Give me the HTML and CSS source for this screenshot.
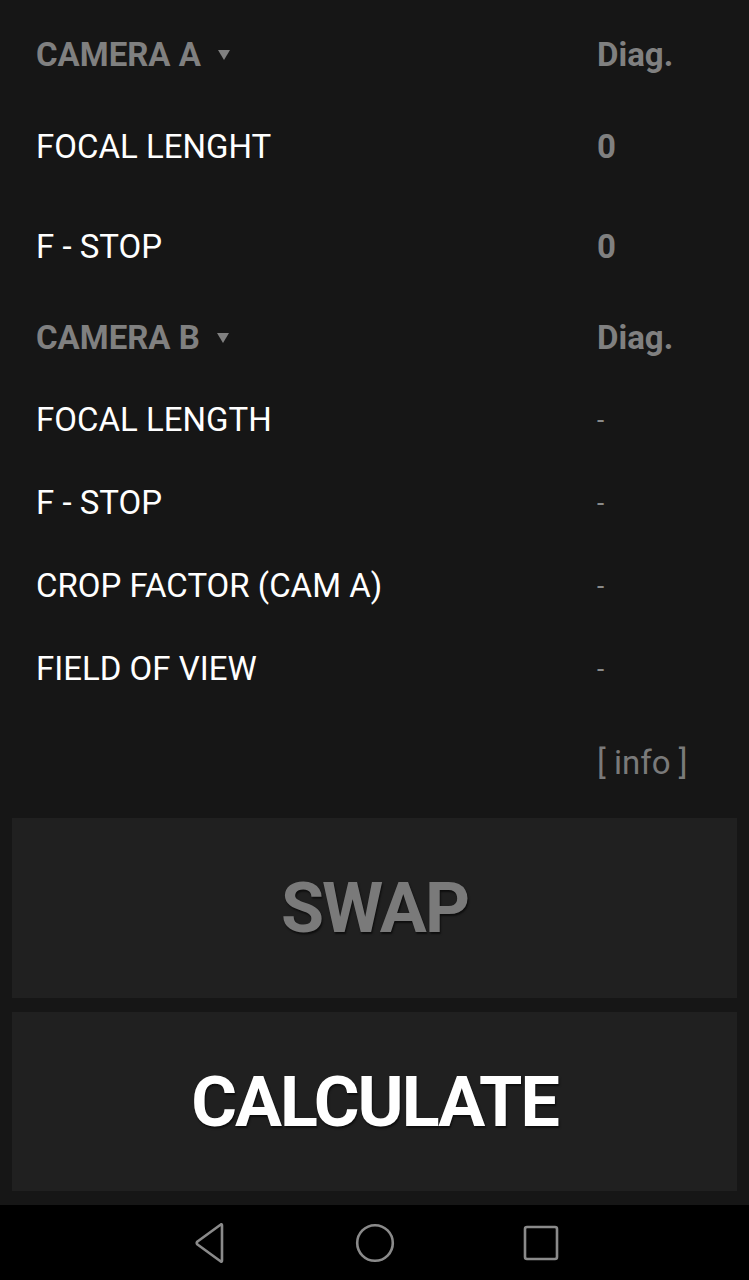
FILE: index.html
```html
<!DOCTYPE html>
<html lang="en">
<head>
    <meta charset="UTF-8">
    <meta name="viewport" content="width=device-width, initial-scale=1.0">
    <title>Lens Converter</title>
    <link rel="stylesheet" href="styles.css">
</head>
<body>
    <div class="app">
        <div class="list">
            <div class="section section-a">
                <div class="row head">
                    <div class="label">CAMERA A <span class="caret"></span></div>
                    <div class="value">Diag.</div>
                </div>
                <div class="row">
                    <div class="label">FOCAL LENGHT</div>
                    <div class="value">0</div>
                </div>
                <div class="row">
                    <div class="label">F - STOP</div>
                    <div class="value">0</div>
                </div>
            </div>

            <div class="section section-b">
                <div class="row head">
                    <div class="label">CAMERA B <span class="caret"></span></div>
                    <div class="value">Diag.</div>
                </div>
                <div class="row">
                    <div class="label">FOCAL LENGTH</div>
                    <div class="value dash">-</div>
                </div>
                <div class="row">
                    <div class="label">F - STOP</div>
                    <div class="value dash">-</div>
                </div>
                <div class="row">
                    <div class="label">CROP FACTOR (CAM A)</div>
                    <div class="value dash">-</div>
                </div>
                <div class="row">
                    <div class="label">FIELD OF VIEW</div>
                    <div class="value dash">-</div>
                </div>
                <div class="row info-row">
                    <div class="label"></div>
                    <div class="value info">[ info ]</div>
                </div>
            </div>
        </div>

        <div class="buttons">
            <button class="big-button swap">SWAP</button>
            <button class="big-button calculate">CALCULATE</button>
        </div>
    </div>

    <div class="nav-bar">
        <svg class="nav-icon" width="40" height="40" viewBox="0 0 40 40">
            <path d="M33 2.5 L33 37.5 Q33 39.5 31.5 38.3 L8.5 21.5 Q7 20 8.5 18.5 L31.5 1.7 Q33 0.5 33 2.5 Z" fill="none" stroke="#8a8a8a" stroke-width="2.6" stroke-linejoin="round"/>
        </svg>
        <svg class="nav-icon" width="40" height="40" viewBox="0 0 40 40">
            <circle cx="20" cy="20" r="17.8" fill="none" stroke="#8a8a8a" stroke-width="2.6"/>
        </svg>
        <svg class="nav-icon" width="40" height="40" viewBox="0 0 40 40">
            <rect x="4" y="4" width="32" height="32" rx="2" fill="none" stroke="#8a8a8a" stroke-width="2.6"/>
        </svg>
    </div>
</body>
</html>
```

FILE: styles.css
```css
body { margin: 0; background-color: #161616; font-family: Roboto, "Noto Sans", Arial, sans-serif; color: #ffffff; }
.app { height: 1205px; display: flex; flex-direction: column; }

.list { padding-top: 12px; }
.row { display: flex; align-items: center; padding-left: 36px; font-size: 33px; }
.label { flex: 1; }
.value { width: 152px; color: #808080; font-weight: bold; }

.section-a .row { height: 100px; }
.section-a .row.head { height: 84px; }
.section-b .row { height: 83px; }
.section-b .row.head { height: 82px; }
.section-b .row.info-row { height: 104px; }

.row.head .label { color: #808080; font-weight: bold; display: flex; align-items: center; }
.caret { display: inline-block; margin-left: 17px; margin-top: 2px; border-left: 6px solid transparent; border-right: 6px solid transparent; border-top: 10px solid #808080; }

.value.dash { font-weight: normal; font-size: 26px; color: #8a8a8a; }
.value.info { font-weight: normal; color: #7a7a7a; }

.buttons { margin-top: 4px; padding: 0 12px; display: flex; flex-direction: column; gap: 14px; }
.big-button { height: 180px; border: none; background-color: #202020; font-family: Roboto, "Noto Sans", Arial, sans-serif; font-weight: bold; font-size: 70px; letter-spacing: -2px; cursor: pointer; text-shadow: 1px 2px 2px rgba(0, 0, 0, 0.6); }
.big-button.swap { color: #7a7a7a; }
.big-button.calculate { color: #ffffff; height: 179px; }

.nav-bar { height: 75px; background-color: #000000; display: flex; justify-content: center; align-items: center; gap: 126px; }
.nav-icon { display: block; }
```
